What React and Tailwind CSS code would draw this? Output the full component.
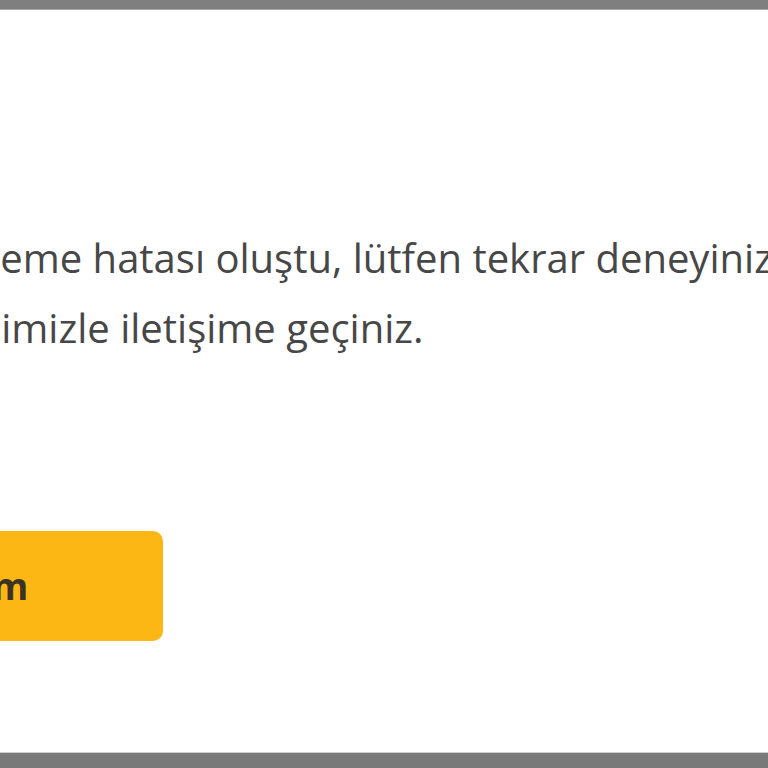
export default function App() {
  return (
    <div className="flex h-[768px] w-[768px] flex-col overflow-hidden bg-white" style={{ fontFamily: '"Open Sans", sans-serif' }}>
      <div className="h-[10px] shrink-0 border-b border-[#a8a8a8] bg-[#7f7f7f]" />
      <div className="flex flex-1 flex-col items-start pt-[213px] -ml-[231px]">
        <p className="whitespace-nowrap text-[40px] leading-[70px] text-[#474747]">
          <span className="block">Üzgünüz, ödeme hatası oluştu, lütfen tekrar deneyiniz veya</span>
          <span className="block">müşteri ekibimizle iletişime geçiniz.</span>
        </p>
        <button className="mt-[168px] h-[110px] w-[394px] rounded-[10px] bg-[#fdb714] pr-[14px] text-[37px] font-bold text-[#3b3323]">
          Tamam
        </button>
      </div>
      <div className="h-[16px] shrink-0 border-t border-[#cfcfcf] bg-[#797979]" />
    </div>
  );
}
